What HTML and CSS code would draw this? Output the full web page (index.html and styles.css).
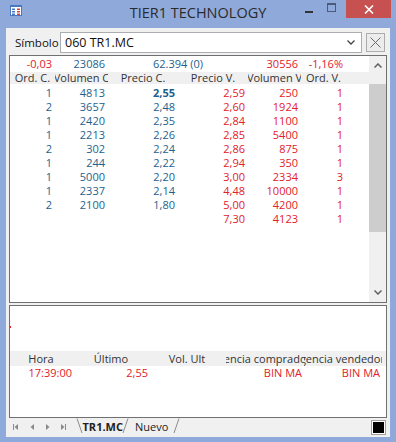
FILE: index.html
```html
<!DOCTYPE html>
<html lang="es">
<head>
	<meta charset="UTF-8">
	<meta name="viewport" content="width=device-width, initial-scale=1.0">
	<title>TIER1 TECHNOLOGY</title>
	<link rel="stylesheet" href="styles.css">
</head>
<body>
	<div class="window">
		<div class="titlebar">
			<svg class="app-icon" width="12" height="11" viewBox="0 0 12 11">
				<rect x="0.5" y="0.5" width="11" height="10" fill="#fff" stroke="#4a78c0"/>
				<rect x="0" y="0" width="12" height="2" fill="#4a78c0"/>
				<rect x="2" y="3.5" width="3" height="1.5" fill="#4a78c0"/>
				<rect x="7" y="3.5" width="3" height="1.5" fill="#d9453d"/>
				<rect x="2" y="6" width="3" height="1.5" fill="#4a78c0"/>
				<rect x="7" y="6" width="3" height="1.5" fill="#d9453d"/>
				<rect x="2" y="8.5" width="3" height="1.5" fill="#4a78c0"/>
				<rect x="7" y="8.5" width="3" height="1.5" fill="#d9453d"/>
			</svg>
			<span class="title">TIER1 TECHNOLOGY</span>
			<div class="controls">
				<span class="btn-min"></span>
				<span class="btn-max"></span>
				<span class="btn-close">
					<svg width="10" height="9" viewBox="0 0 10 9"><path d="M1 0.5 L9 8.5 M9 0.5 L1 8.5" stroke="#fff" stroke-width="1.6"/></svg>
				</span>
			</div>
		</div>

		<div class="client">
			<div class="symbol-row">
				<label for="symbol">Símbolo</label>
				<div class="combo">
					<span id="symbol">060 TR1.MC</span>
					<svg width="8" height="5" viewBox="0 0 8 5"><polyline points="0.5,0.5 4,4 7.5,0.5" fill="none" stroke="#444" stroke-width="1.3"/></svg>
				</div>
				<button class="clear">
					<svg width="11" height="11" viewBox="0 0 11 11"><path d="M0.5 0.5 L10.5 10.5 M10.5 0.5 L0.5 10.5" stroke="#6a6a6a" stroke-width="1"/></svg>
				</button>
			</div>

			<div class="pane book">
				<div class="grid">
					<div class="row summary">
						<span class="sell">-0,03</span>
						<span class="buy">23086</span>
						<span class="buy span2">62.394 (0)</span>
						<span class="sell">30556</span>
						<span class="sell">-1,16%</span>
					</div>
					<div class="row head">
						<span><b>Ord. C.</b></span>
						<span><b>Volumen C</b></span>
						<span><b>Precio C.</b></span>
						<span><b>Precio V.</b></span>
						<span><b>Volumen V</b></span>
						<span><b>Ord. V.</b></span>
					</div>
					<div class="rows">
						<div class="row"><span class="buy">1</span><span class="buy">4813</span><span class="buy best">2,55</span><span class="sell">2,59</span><span class="sell">250</span><span class="sell">1</span></div>
						<div class="row"><span class="buy">2</span><span class="buy">3657</span><span class="buy">2,48</span><span class="sell">2,60</span><span class="sell">1924</span><span class="sell">1</span></div>
						<div class="row"><span class="buy">1</span><span class="buy">2420</span><span class="buy">2,35</span><span class="sell">2,84</span><span class="sell">1100</span><span class="sell">1</span></div>
						<div class="row"><span class="buy">1</span><span class="buy">2213</span><span class="buy">2,26</span><span class="sell">2,85</span><span class="sell">5400</span><span class="sell">1</span></div>
						<div class="row"><span class="buy">2</span><span class="buy">302</span><span class="buy">2,24</span><span class="sell">2,86</span><span class="sell">875</span><span class="sell">1</span></div>
						<div class="row"><span class="buy">1</span><span class="buy">244</span><span class="buy">2,22</span><span class="sell">2,94</span><span class="sell">350</span><span class="sell">1</span></div>
						<div class="row"><span class="buy">1</span><span class="buy">5000</span><span class="buy">2,20</span><span class="sell">3,00</span><span class="sell">2334</span><span class="sell">3</span></div>
						<div class="row"><span class="buy">1</span><span class="buy">2337</span><span class="buy">2,14</span><span class="sell">4,48</span><span class="sell">10000</span><span class="sell">1</span></div>
						<div class="row"><span class="buy">2</span><span class="buy">2100</span><span class="buy">1,80</span><span class="sell">5,00</span><span class="sell">4200</span><span class="sell">1</span></div>
						<div class="row"><span></span><span></span><span></span><span class="sell">7,30</span><span class="sell">4123</span><span class="sell">1</span></div>
					</div>
				</div>
				<div class="vscroll">
					<div class="arrow-up">
						<svg width="8" height="5" viewBox="0 0 8 5"><polyline points="0.5,4.5 4,1 7.5,4.5" fill="none" stroke="#606060" stroke-width="1.5"/></svg>
					</div>
					<div class="thumb"></div>
					<div class="arrow-down">
						<svg width="8" height="5" viewBox="0 0 8 5"><polyline points="0.5,0.5 4,4 7.5,0.5" fill="none" stroke="#606060" stroke-width="1.5"/></svg>
					</div>
				</div>
			</div>

			<div class="pane trades">
				<span class="mark"></span>
				<div class="trow head">
					<span><b>Hora</b></span>
					<span><b>Último</b></span>
					<span><b>Vol. Ult</b></span>
					<span><b>Agencia compradora</b></span>
					<span><b>Agencia vendedora</b></span>
				</div>
				<div class="trow">
					<span class="sell">17:39:00</span>
					<span class="sell">2,55</span>
					<span></span>
					<span class="sell">BIN MA</span>
					<span class="sell">BIN MA</span>
				</div>
			</div>

			<div class="tabbar">
				<svg class="tabs" width="180" height="19" viewBox="0 0 180 19">
					<g fill="#8a8a8a">
						<rect x="7" y="6" width="1" height="6"/>
						<polygon points="12,6 12,12 8.5,9"/>
						<polygon points="28,6 28,12 24.5,9"/>
						<polygon points="40,6 40,12 43.5,9"/>
						<polygon points="55,6 55,12 58.5,9"/>
						<rect x="59" y="6" width="1" height="6"/>
					</g>
					<g stroke="#8c8c8c" stroke-width="1" fill="none">
						<path d="M71 0.5 L76 15"/>
						<path d="M117 15 L122 0.5"/>
						<path d="M168 15 L173 0.5"/>
					</g>
					<text class="tab-active" x="76.5" y="12.5">TR1.MC</text>
					<text class="tab" x="129" y="12.5">Nuevo</text>
				</svg>
				<span class="swatch"></span>
			</div>
		</div>
	</div>
</body>
</html>
```

FILE: styles.css
```css
body {
	margin: 0;
	background-color: #8fa9da;
	font-family: "Open Sans", "Noto Sans", sans-serif;
}

.window {
	width: 396px;
	height: 442px;
	display: flex;
	flex-direction: column;
	background-color: #8fa9da;
}

/* title bar */
.titlebar {
	height: 28px;
	flex: none;
	display: grid;
	grid-template-columns: 1fr auto 1fr;
	align-items: start;
}

.app-icon {
	margin: 5px 0 0 10px;
}

.title {
	font-size: 14.5px;
	line-height: 26px;
	color: #2b2b2b;
}

.controls {
	justify-self: end;
	display: flex;
	align-items: flex-start;
	margin-right: 5px;
}

.btn-min {
	width: 8px;
	height: 2px;
	background-color: #333;
	margin: 11px 14px 0 0;
}

.btn-max {
	width: 7px;
	height: 6px;
	border: 1px solid #4a5a78;
	border-top-width: 2px;
	margin: 3px 10px 0 0;
}

.btn-close {
	width: 45px;
	height: 18px;
	background-color: #c75050;
	display: flex;
	align-items: center;
	justify-content: center;
}

/* client area */
.client {
	flex: 1;
	margin: 0 6px 5px;
	background-color: #f0f0f0;
	display: flex;
	flex-direction: column;
	font-size: 11px;
}

.symbol-row {
	height: 27px;
	flex: none;
	display: flex;
	align-items: center;
	padding-top: 1px;
	box-sizing: border-box;
}

.symbol-row label {
	width: 45px;
	margin-left: 9px;
	color: #111;
	font-size: 11.5px;
}

.combo {
	width: 302px;
	height: 21px;
	box-sizing: border-box;
	border: 1px solid #abadb3;
	background-color: #fff;
	display: flex;
	align-items: center;
	justify-content: space-between;
	padding: 0 6px 0 4px;
	font-size: 12.5px;
	color: #111;
}

.clear {
	width: 19px;
	height: 19px;
	margin-left: 4px;
	padding: 0;
	border: 1px solid #acacac;
	background-color: #ececec;
	display: flex;
	align-items: center;
	justify-content: center;
}

.pane {
	margin: 0 3px;
	border: 1px solid #707070;
	background-color: #fff;
	box-sizing: border-box;
	flex: none;
}

/* order book */
.book {
	height: 248px;
	display: flex;
}

.grid {
	flex: 1;
}

.row {
	display: grid;
	grid-template-columns: 45px 53px 70px 70px 53px 45px;
}

.row > span,
.trow > span {
	text-align: right;
	padding-right: 3px;
	white-space: nowrap;
	overflow: hidden;
}

.summary {
	height: 16px;
	line-height: 16px;
}

.summary .span2 {
	grid-column: span 2;
	text-align: center;
	padding: 0;
}

.head {
	background-color: #f0f0f0;
	color: #333;
}

.row.head {
	height: 12px;
	line-height: 12px;
}

.head > span {
	display: flex;
	justify-content: center;
	padding: 0;
}

.head b {
	font-weight: normal;
	white-space: nowrap;
	flex: none;
}

.rows {
	padding-top: 2px;
}

.rows .row {
	height: 14px;
	line-height: 14px;
}

.buy {
	color: #1e5f8e;
}

.sell {
	color: #e3202a;
}

.best {
	font-weight: bold;
}

.vscroll {
	width: 17px;
	background-color: #f0f0f0;
	display: flex;
	flex-direction: column;
}

.arrow-up {
	height: 28px;
	display: flex;
	justify-content: center;
	padding-top: 7px;
	box-sizing: border-box;
}

.thumb {
	height: 148px;
	background-color: #cdcdcd;
}

.arrow-down {
	flex: 1;
	display: flex;
	justify-content: center;
	align-items: flex-end;
	padding-bottom: 7px;
}

/* trades */
.trades {
	height: 113px;
	margin-top: 2px;
}

.mark {
	display: block;
	width: 1px;
	height: 2px;
	margin-top: 20px;
	background-color: #e3202a;
}

.trow {
	display: grid;
	grid-template-columns: 64px 76px 76px 78px 78px;
	height: 14px;
	line-height: 14px;
}

.trow > span {
	padding-right: 2px;
}

.trow.head {
	margin-top: 23px;
	height: 15px;
	line-height: 15px;
}

/* sheet tabs */
.tabbar {
	flex: 1;
	display: flex;
	align-items: flex-start;
}

.tabs text {
	font-size: 11px;
	fill: #222;
}

.tabs .tab-active {
	font-weight: bold;
}

.swatch {
	width: 11px;
	height: 11px;
	margin: 2px 4px 0 auto;
	border: 1px solid #a0a0a0;
	padding: 1px;
	background-color: #000;
	background-clip: content-box;
	box-shadow: inset 0 0 0 1px #fff;
}
```
